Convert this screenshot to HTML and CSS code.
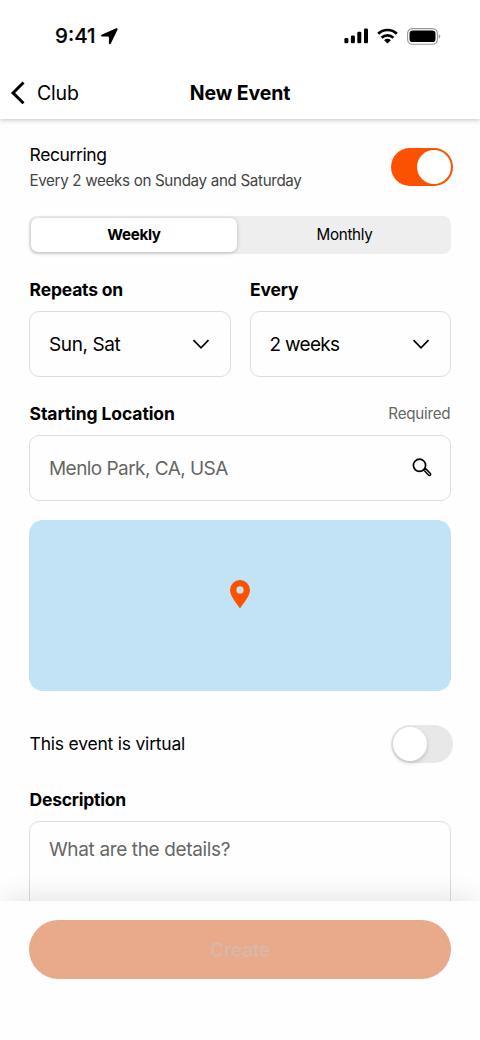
FILE: index.html
```html
<!DOCTYPE html>
<html lang="en">
<head>
<meta charset="utf-8">
<title>New Event</title>
<link rel="stylesheet" href="styles.css">
</head>
<body>
<div class="screen">
  <header class="header">
    <div class="status">
      <div class="status-left">
        <span class="clock">9:41</span>
        <svg class="arrow" width="17" height="17" viewBox="0 0 17 17"><path d="M15.200.3.6 6.800q-1.200 1.200.2 1.800h6.500q.6 0 .6.6v6.300q.7 1.500 1.800.2L16.600 1.600q.2-1.400-1.400-1.300z"/></svg>
      </div>
      <div class="status-right">
        <svg width="25" height="16" viewBox="0 0 25 16"><rect x=".4" y="10" width="4" height="5.300" rx="1.300"/><rect x="6.900" y="7.400" width="4" height="7.900" rx="1.300"/><rect x="13.300" y="3.800" width="4" height="11.500" rx="1.300"/><rect x="20" y="0.400" width="4" height="14.900" rx="1.300"/></svg>
        <svg class="wifi" width="21" height="16" viewBox="0 0 21 16"><g fill="none" stroke="#000" stroke-width="2.700"><path d="M1.200 5.800a13.300 13.300 0 0 1 18.600 0"/><path d="M4.600 9.700a8.400 8.400 0 0 1 11.800 0"/></g><path d="M10.500 15.500 7.100 12.200a4.900 4.900 0 0 1 6.800 0z"/></svg>
        <svg class="battery" width="34" height="17" viewBox="0 0 34 17"><rect x=".6" y=".6" width="29.800" height="15.600" rx="4.800" fill="none" stroke="#999" stroke-width="1.100"/><rect x="2.500" y="2.500" width="26" height="11.600" rx="3.200"/><path d="M31.700 6.200q1.600.6 1.600 2.200t-1.600 2.200z" fill="#999"/></svg>
      </div>
    </div>
    <nav class="nav">
      <div class="back">
        <svg width="16" height="26" viewBox="0 0 16 26"><path d="m13.500 2.500-10.500 10.400 10.500 10.400" fill="none" stroke="#000" stroke-width="2.900"/></svg>
        <span class="back-label">Club</span>
      </div>
      <h1 class="title">New Event</h1>
    </nav>
  </header>

  <main class="form">
    <section class="toggle-row">
      <div class="toggle-copy">
        <div class="option recurring">Recurring</div>
        <div class="summary">Every 2 weeks on Sunday and Saturday</div>
      </div>
      <div class="switch switch-on"><div class="knob"></div></div>
    </section>

    <div class="segments">
      <div class="segment segment-active">Weekly</div>
      <div class="segment">Monthly</div>
    </div>

    <div class="columns">
      <div class="field">
        <div class="label repeats">Repeats on</div>
        <div class="input select"><span class="sun">Sun, Sat</span>
          <svg width="18" height="12" viewBox="0 0 18 12"><path class="line" d="m1.500 2.200 7.500 7.600 7.500-7.600"/></svg>
        </div>
      </div>
      <div class="field">
        <div class="label every">Every</div>
        <div class="input select"><span class="weeks">2 weeks</span>
          <svg width="18" height="12" viewBox="0 0 18 12"><path class="line" d="m1.500 2.200 7.500 7.600 7.500-7.600"/></svg>
        </div>
      </div>
    </div>

    <div class="field location">
      <div class="label-row"><div class="label starting">Starting Location</div><span class="required">Required</span></div>
      <div class="input search"><span class="hint place">Menlo Park, CA, USA</span>
        <svg width="20" height="20" viewBox="0 0 20 20"><g fill="none" stroke="#000"><circle cx="7.500" cy="7.300" r="6.100" stroke-width="1.700"/><path d="m11.800 12 1.600-1.600 5 5.100q.6.800-.1 1.700-.9.700-1.600.1z" stroke-width="1.500"/></g></svg>
      </div>
    </div>

    <div class="map">
      <svg width="20" height="29" viewBox="0 0 20 29"><path fill="#fc5200" fill-rule="evenodd" d="M10 0a10 10 0 0 1 10 10c0 6-6.200 12.700-10 18.500C6.200 22.700 0 16 0 10A10 10 0 0 1 10 0zm0 6.300a3.600 3.600 0 1 0 0 7.200 3.600 3.600 0 0 0 0-7.200z"/></svg>
    </div>

    <section class="toggle-row virtual-row">
      <div class="option virtual">This event is virtual</div>
      <div class="switch"><div class="knob"></div></div>
    </section>

    <div class="field description">
      <div class="label desc-label">Description</div>
      <div class="input textarea"><span class="hint details">What are the details?</span></div>
    </div>
  </main>

  <footer class="footer"><div class="create">Create</div></footer>
</div>
</body>
</html>
```
FILE: styles.css
```css
* { box-sizing: border-box; }
body {
  margin: 0;
  background: #fff;
  color: #000;
  font-family: Inter, "Liberation Sans", sans-serif;
}
svg { display: block; flex: none; }
.screen {
  width: 480px;
  height: 1040px;
  display: flex;
  flex-direction: column;
  overflow: hidden;
  background: #fefefe;
}
.header {
  flex: none;
  height: 119px;
  background: #fff;
  box-shadow: 0 1px 5px rgba(0, 0, 0, .24);
}
.status {
  height: 72px;
  padding: 0 39px 0 55px;
  display: flex;
  justify-content: space-between;
  align-items: center;
}
.status-left, .status-right { display: flex; align-items: center; }
.status-left { gap: 5px; }
.clock { font-size: 20.500px; font-weight: 500; letter-spacing: 0; line-height: 24px; -webkit-text-stroke: .2px #000; }
.wifi { margin-left: 8px; }
.battery { margin-left: 9px; }
.nav {
  height: 41px;
  padding: 0 10px;
  display: grid;
  grid-template-columns: 1fr auto 1fr;
  align-items: center;
}
.back { display: flex; align-items: center; gap: 11px; }
.back-label { font-size: 19.500px; letter-spacing: -.2px; }
.title { margin: 0; font-size: 19.500px; font-weight: 700; letter-spacing: -.1px; }

.form {
  flex: 1;
  min-height: 0;
  overflow: hidden;
  padding: 26px 29px 0;
  display: flex;
  flex-direction: column;
}
.header, .footer { position: relative; z-index: 1; }
.form > * { flex: none; }
.toggle-row {
  display: flex;
  justify-content: space-between;
  align-items: center;
  margin-right: -2px;
}
.option { padding-left: .6px; font-size: 17.500px; line-height: 22px; letter-spacing: -.22px; }
.recurring { letter-spacing: -.4px; }
.summary { margin-top: 4px; padding-left: .4px; color: #444; font-size: 15.200px; line-height: 22px; letter-spacing: -.34px; }
.toggle-copy { margin-top: -1px; }
.switch {
  width: 62px;
  height: 38px;
  padding: 2px;
  border-radius: 19px;
  background: #e8e8e8;
  display: flex;
}
.switch-on { background: #fc5200; justify-content: flex-end; margin-top: -4px; }
.switch-on .knob { box-shadow: none; }
.knob {
  width: 34px;
  height: 34px;
  border-radius: 50%;
  background: #fff;
  box-shadow: 0 2px 4px rgba(0, 0, 0, .18);
}
.segments {
  margin-top: 24px;
  height: 38px;
  padding: 2px;
  border-radius: 8px;
  background: #eee;
  display: flex;
}
.segment {
  flex: 1;
  padding: 0 0 1px 3px;
  display: flex;
  align-items: center;
  justify-content: center;
  font-size: 15.200px;
  letter-spacing: -.32px;
}
.segment-active {
  flex: 0 0 206px;
  padding-left: 0;
  border-radius: 7px;
  background: #fff;
  font-weight: 700;
  box-shadow: 0 1px 4px rgba(0, 0, 0, .22);
}
.columns { margin-top: 25px; display: grid; grid-template-columns: 1fr 1fr; gap: 19px; }
.label { padding-left: .6px; font-size: 17.500px; font-weight: 700; line-height: 22px; letter-spacing: -.2px; }
.starting { letter-spacing: -.1px; }
.desc-label { letter-spacing: -.25px; }
.input {
  margin-top: 10px;
  height: 66px;
  padding: 0 19px;
  border: 1px solid #dedddb;
  border-radius: 10px;
  display: flex;
  justify-content: space-between;
  align-items: center;
  font-size: 19px;
}
.select { padding-right: 20px; }
.search { padding-right: 18px; }
.sun { letter-spacing: -.4px; }
.weeks { letter-spacing: -.7px; }
.place { letter-spacing: -.55px; }
.details { letter-spacing: -.36px; }
.line { fill: none; stroke: #000; stroke-width: 1.700; }
.location { margin-top: 26px; }
.label-row { display: flex; justify-content: space-between; }
.required { padding-right: .6px; color: #666; font-size: 15.200px; line-height: 22px; letter-spacing: -.24px; }
.hint { color: #666; }
.map {
  margin-top: 19px;
  height: 171px;
  padding-bottom: 22px;
  border-radius: 14px;
  background: #c1e3f5;
  display: flex;
  align-items: center;
  justify-content: center;
}
.virtual-row { margin-top: 34px; }
.description { margin-top: 26px; }
.textarea { height: 160px; padding-top: 16px; align-items: flex-start; line-height: 24px; }
.footer {
  flex: none;
  height: 139px;
  padding: 19px 29px;
  background: #fefefe;
  box-shadow: 0 -8px 28px -8px rgba(0, 0, 0, .14);
}
.create {
  height: 59px;
  border-radius: 29.500px;
  background: #e8aa8a;
  color: #dcb5a3;
  display: flex;
  align-items: center;
  justify-content: center;
  font-size: 19.500px;
  font-weight: 700;
  letter-spacing: -.6px;
}
```
